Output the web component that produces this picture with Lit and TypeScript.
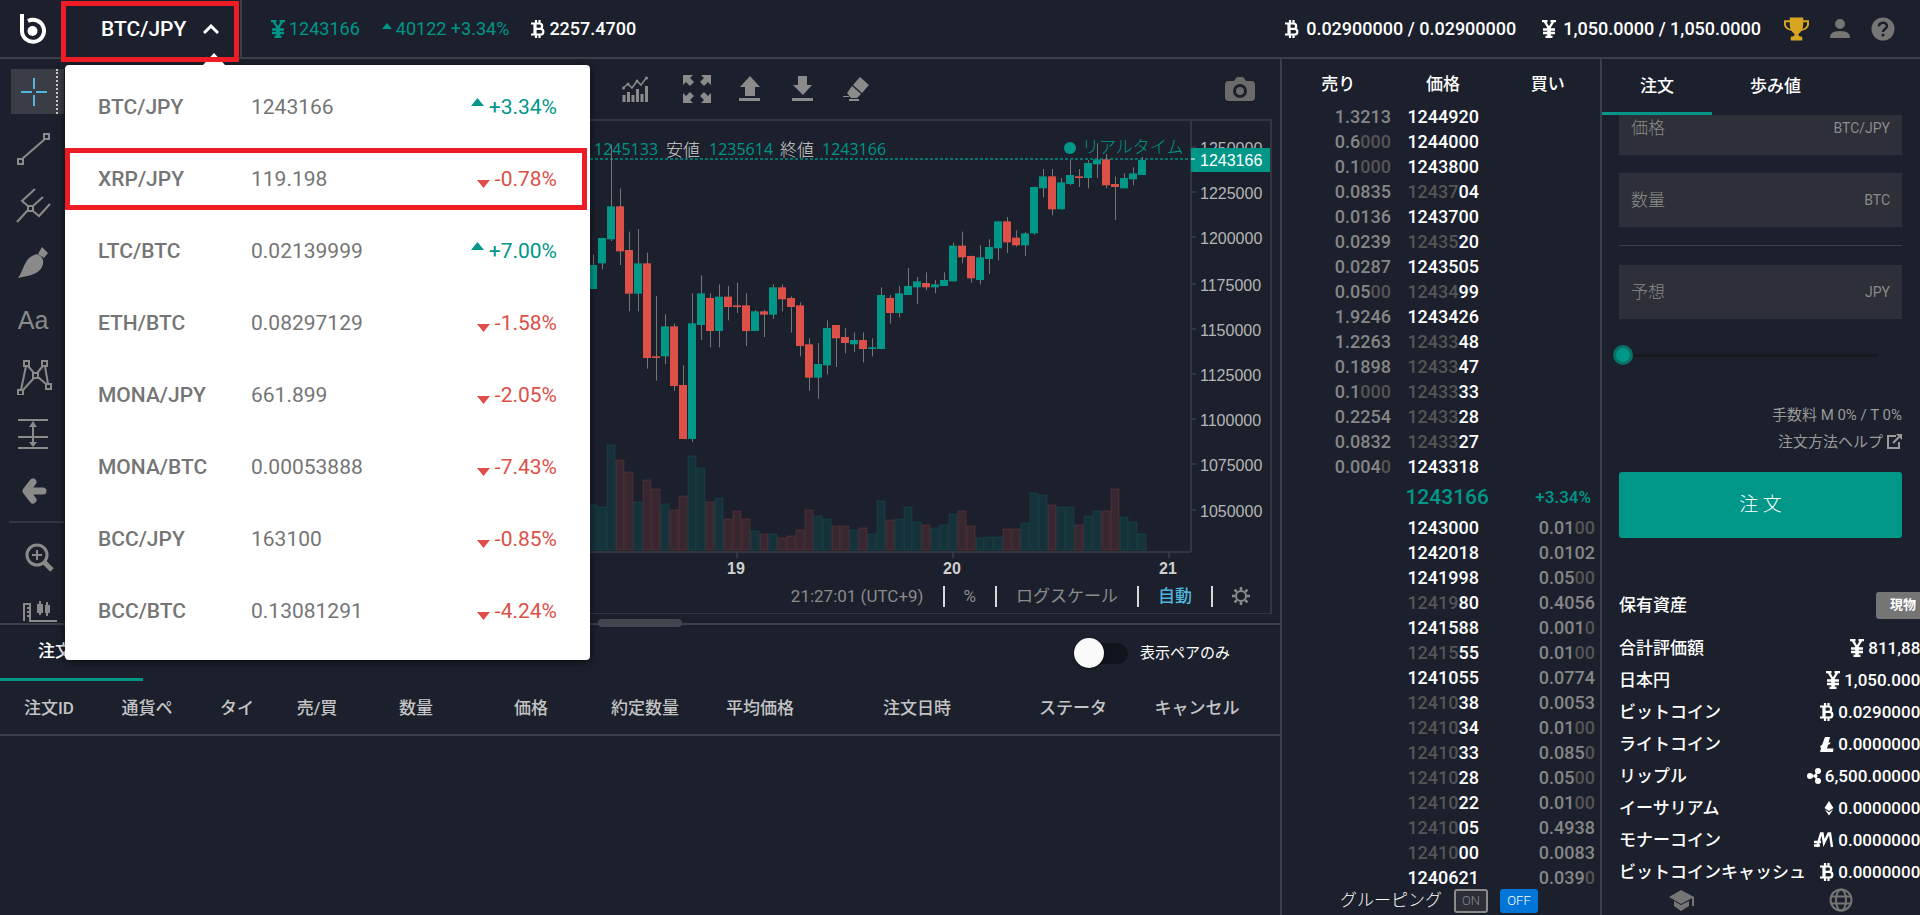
import { LitElement, html, css, svg } from "lit";
import { customElement } from "lit/decorators.js";

type Pair = [name: string, price: string, change: string];
type Level = [size: string, zeros: string, dim: string, price: string];

const PAIRS: Pair[] = [
  ["BTC/JPY", "1243166", "+3.34%"],
  ["XRP/JPY", "119.198", "-0.78%"],
  ["LTC/BTC", "0.02139999", "+7.00%"],
  ["ETH/BTC", "0.08297129", "-1.58%"],
  ["MONA/JPY", "661.899", "-2.05%"],
  ["MONA/BTC", "0.00053888", "-7.43%"],
  ["BCC/JPY", "163100", "-0.85%"],
  ["BCC/BTC", "0.13081291", "-4.24%"],
];

const ASKS: Level[] = [
  ["1.3213", "", "", "1244920"],
  ["0.6", "000", "", "1244000"],
  ["0.1", "000", "", "1243800"],
  ["0.0835", "", "12437", "04"],
  ["0.0136", "", "", "1243700"],
  ["0.0239", "", "12435", "20"],
  ["0.0287", "", "", "1243505"],
  ["0.05", "00", "12434", "99"],
  ["1.9246", "", "", "1243426"],
  ["1.2263", "", "12433", "48"],
  ["0.1898", "", "12433", "47"],
  ["0.1", "000", "12433", "33"],
  ["0.2254", "", "12433", "28"],
  ["0.0832", "", "12433", "27"],
  ["0.004", "0", "", "1243318"],
];

const BIDS: Level[] = [
  ["0.01", "00", "", "1243000"],
  ["0.0102", "", "", "1242018"],
  ["0.05", "00", "", "1241998"],
  ["0.4056", "", "12419", "80"],
  ["0.001", "0", "", "1241588"],
  ["0.01", "00", "12415", "55"],
  ["0.0774", "", "", "1241055"],
  ["0.0053", "", "12410", "38"],
  ["0.01", "00", "12410", "34"],
  ["0.085", "0", "12410", "33"],
  ["0.05", "00", "12410", "28"],
  ["0.01", "00", "12410", "22"],
  ["0.4938", "", "12410", "05"],
  ["0.0083", "", "12410", "00"],
  ["0.039", "0", "", "1240621"],
];

const ORDER_COLUMNS: [string, number][] = [
  ["注文ID", 98], ["通貨ペ", 98], ["タイ", 82], ["売/買", 78], ["数量", 120],
  ["価格", 110], ["約定数量", 118], ["平均価格", 112], ["注文日時", 202],
  ["ステータ", 110], ["キャンセル", 138],
];
const ORDER_TOTAL = 1280;

const ASSETS: [string, string, string][] = [
  ["合計評価額", "yen", "811,880"],
  ["日本円", "yen", "1,050.0000"],
  ["ビットコイン", "btc", "0.02900000"],
  ["ライトコイン", "ltc", "0.00000000"],
  ["リップル", "xrp", "6,500.000000"],
  ["イーサリアム", "eth", "0.00000000"],
  ["モナーコイン", "mona", "0.00000000"],
  ["ビットコインキャッシュ", "btc", "0.00000000"],
];

// Candles in thirds of a pixel: high, body top, body bottom, low, direction, volume.
const CANDLES: [number, number, number, number, 0 | 1, number][] = [
  [614, 645, 717, 717, 1, 134], [564, 564, 640, 658, 1, 129], [284, 469, 568, 573, 1, 314],
  [415, 469, 604, 645, 0, 269], [545, 600, 731, 784, 0, 233], [537, 640, 731, 784, 1, 143],
  [608, 640, 924, 956, 0, 211], [738, 919, 924, 992, 0, 183], [793, 829, 919, 942, 1, 138],
  [820, 829, 1008, 1022, 0, 120], [946, 1005, 1167, 1167, 0, 161], [730, 820, 1167, 1176, 1, 282],
  [676, 730, 825, 870, 1, 247], [730, 744, 843, 892, 0, 143], [703, 740, 843, 892, 1, 156],
  [708, 740, 771, 811, 0, 93], [698, 766, 771, 789, 0, 116], [730, 766, 843, 888, 0, 93],
  [780, 784, 843, 843, 1, 57], [780, 784, 794, 861, 0, 48], [703, 712, 794, 807, 1, 48],
  [703, 712, 748, 784, 0, 35], [739, 744, 771, 848, 0, 43], [757, 766, 888, 919, 0, 61],
  [865, 883, 983, 1022, 0, 121], [879, 942, 983, 1046, 1, 102], [811, 834, 946, 973, 1, 93],
  [825, 825, 865, 951, 0, 71], [834, 861, 879, 910, 0, 71], [847, 870, 883, 906, 1, 61],
  [847, 870, 897, 937, 0, 66], [865, 892, 897, 919, 1, 48], [712, 735, 897, 897, 1, 147],
  [735, 744, 789, 821, 0, 89], [708, 730, 789, 802, 1, 93], [654, 708, 735, 735, 1, 130],
  [681, 694, 712, 762, 1, 84], [667, 699, 712, 721, 0, 75], [690, 703, 712, 730, 1, 66],
  [667, 690, 708, 708, 1, 75], [577, 587, 694, 694, 1, 107], [545, 587, 622, 640, 0, 116],
  [617, 618, 685, 698, 0, 71], [586, 622, 690, 703, 1, 35], [568, 591, 627, 672, 1, 40],
  [514, 514, 595, 631, 1, 40], [501, 514, 577, 609, 0, 62], [541, 563, 586, 590, 0, 62],
  [546, 550, 586, 618, 1, 80], [410, 411, 550, 554, 1, 170], [357, 379, 415, 442, 1, 166],
  [357, 379, 478, 496, 0, 134], [384, 397, 478, 478, 1, 129], [330, 375, 402, 406, 1, 129],
  [357, 379, 384, 411, 0, 75], [330, 339, 384, 415, 1, 102], [280, 328, 343, 384, 1, 116],
  [312, 328, 406, 415, 0, 116], [380, 402, 411, 510, 0, 183], [370, 384, 415, 415, 1, 98],
  [352, 370, 388, 406, 1, 84], [321, 330, 375, 375, 1, 48],
];

const PRICE_TICKS: [string, number][] = [
  ["1250000", 148], ["1225000", 193], ["1200000", 238], ["1175000", 285], ["1150000", 330],
  ["1125000", 375], ["1100000", 420], ["1075000", 465], ["1050000", 511],
];
const DAY_TICKS: [string, number][] = [["19", 736], ["20", 952], ["21", 1168]];

const coin = (kind: string) => {
  switch (kind) {
    case "yen":
      return html`<svg class="coin" viewBox="0 0 14 18" role="img" aria-label="JPY"><path d="M0 1h5.500M8.500 1H14M2.500 1L7 8.500 11.500 1M7 8v9M3.500 17h7M1 9.500h12M1 13h12" fill="none" stroke="currentColor" stroke-width="2.400"/><path d="M7 8v9" stroke="currentColor" stroke-width="3.500"/></svg>`;
    case "btc":
      return html`<svg class="coin" viewBox="0 0 14 18" role="img" aria-label="BTC"><path d="M0 3.500h8.500a2.500 2.500 0 0 1 0 5.300H3.500M3.500 8.800h6a2.800 2.800 0 0 1 0 5.700H0M5 0v3M8.500 0v3M5 15v3M8.500 15v3" fill="none" stroke="currentColor" stroke-width="2.200"/><path d="M4 3v12" stroke="currentColor" stroke-width="3.200"/></svg>`;
    case "ltc":
      return html`<svg class="coin" viewBox="0 0 14 18" role="img" aria-label="LTC"><path d="M5 2h5L8.500 8l2-1-.5 2-2 1-1 3.500h6.500L13 17H0l1.300-4.800-1.300.6.500-2 1.500-.8z" fill="currentColor"/></svg>`;
    case "xrp":
      return html`<svg class="coin" viewBox="0 0 14 18" role="img" aria-label="XRP"><path d="M3 9h5l3-5M8 9l3 5" fill="none" stroke="currentColor" stroke-width="1.500"/><g fill="currentColor"><circle cx="3" cy="9" r="3"/><circle cx="11" cy="4" r="3"/><circle cx="11" cy="14" r="3"/><circle cx="8.500" cy="9" r="2"/></g></svg>`;
    case "eth":
      return html`<svg class="coin slim" viewBox="0 0 10 18" role="img" aria-label="ETH"><path d="M5 2l4.500 7L5 12 .5 9zM.8 10.500L5 13.300l4.200-2.800L5 16.500z" fill="currentColor"/></svg>`;
    default:
      return html`<svg class="coin wide" viewBox="0 0 20 18" role="img" aria-label="MONA"><path d="M3 16L7 2.500h1.500L10 12l4.500-9.500H16L18 16M0 11h7M0 14.500h6" fill="none" stroke="currentColor" stroke-width="2.400"/></svg>`;
  }
};

const TOOLS: [string, unknown][] = [
  ["十字線", svg`<path class="accent" d="M18 4v11M18 21v11M5 18h11M20 18h11"/>`],
  ["トレンドライン", svg`<path d="M2 28h5v5H2zM28 3h5v5h-5zM6 28L29 8"/>`],
  ["ピッチフォーク", svg`<path d="M12 18h5v5h-5zM12 22L1 34M12 18L6 13 19 1M17 18L27 9M17 23l6 5 11-12"/>`],
  ["ブラシ", svg`<path class="solid" d="M2 33C7 27 8 15 16 11c4-2 5-2 7-1 5 3 5 8 3 12-4 8-15 9-24 11zM22 9l4-7 6 6-4 5z"/>`],
  ["テキスト", svg`<text x="17" y="27" text-anchor="middle">Aa</text>`],
  ["パターン", svg`<path d="M8 2h5v5H8zM26 2h5v5h-5zM17 14h5v5h-5zM2 31h5v5H2zM30 25h5v5h-5zM10 7L5 31M7 31l11-12M12 7l6 7M27 7l-6 7M29 7l3 18M22 18l8 7"/>`],
  ["予測", svg`<path d="M2 4h30M2 21h30M2 32h30M17 6v24"/><path class="solid" d="M17 5l4 6h-8zM17 31l4-5h-8z"/>`],
  ["戻る", svg`<path class="fat" d="M17 9l-7 9 7 9M11 18h16"/>`],
];

@customElement("app-root")
export class AppRoot extends LitElement {
  static styles = css`
    :host {
      --bg: #1b202c;
      --line: #3c3f47;
      --teal: #009688;
      --red: #dd5048;
      display: flex;
      flex-direction: column;
      height: 100vh;
      overflow: hidden;
      background: var(--bg);
      color: #fff;
      font-family: Roboto, "Noto Sans CJK JP", sans-serif;
      font-size: 17px;
      line-height: 24px;
    }
    * { box-sizing: border-box; }
    button { font: inherit; color: inherit; background: none; border: 0; padding: 0; cursor: pointer; }
    svg { display: block; flex: none; }
    ul { list-style: none; margin: 0; padding: 0; }
    .teal { color: var(--teal); }
    .coin { width: 14px; height: 18px; }
    .coin.slim { width: 10px; }
    .coin.wide { width: 20px; }

    header { display: flex; align-items: center; height: 59px; flex: none; border-bottom: 2px solid var(--line); font-size: 18px; }
    .logo { width: 62px; padding-left: 20px; }
    .pair { position: relative; align-self: stretch; width: 180px; border-right: 2px solid var(--line); }
    .pair-button { display: flex; align-items: center; gap: 17px; width: 100%; height: 57px; padding-left: 39px; font-size: 21px; font-weight: 500; }
    .mark { position: absolute; border: 5px solid #ee1c24; pointer-events: none; }
    .mark-pair { left: -1px; top: 1px; width: 178px; height: 61px; z-index: 3; }
    .ticker { display: flex; align-items: center; gap: 22px; padding-left: 29px; }
    .ticker span, .balances span { display: flex; align-items: center; gap: 4px; }
    .strong { font-weight: 500; }
    .balances { display: flex; align-items: center; gap: 26px; margin-left: auto; padding-right: 23px; font-weight: 500; }
    .balances span { gap: 7px; }
    .header-icons { display: flex; align-items: center; gap: 21px; padding-right: 25px; color: #757575; }

    .menu { position: absolute; left: 3px; top: 65px; width: 525px; padding: 6px 0 13px; background: #fff; border-radius: 4px; box-shadow: 0 2px 8px rgba(0, 0, 0, 0.6); color: #757575; z-index: 2; }
    .menu::before { content: ""; position: absolute; left: 138px; top: -12px; border: 11px solid transparent; border-top: 0; border-bottom: 12px solid #fff; }
    .menu li { position: relative; }
    .menu-row { display: grid; grid-template-columns: 153px 1fr auto; align-items: center; width: 100%; height: 72px; padding: 0 33px; text-align: left; font-size: 21px; }
    .change { display: flex; align-items: center; gap: 5px; }
    .up { color: var(--teal); }
    .down { color: var(--red); }
    .up svg { margin-bottom: 10px; }
    .down svg { margin-top: 9px; }
    .mark-row { left: 0; right: 3px; top: 5px; bottom: 5px; }

    main { display: flex; flex: 1; min-height: 0; }
    .left { flex: 1; min-width: 0; display: flex; flex-direction: column; }
    .chart { display: grid; grid-template-columns: 64px 1fr; height: 564px; overflow: hidden; }
    .tools { display: flex; flex-direction: column; padding-top: 4px; }
    .tool { display: flex; align-items: center; height: 57px; flex: none; padding-left: 16px; }
    .tool.active { position: relative; height: 45px; margin: 6px 0 6px 11px; padding-left: 5px; background: #3a3d45; }
    .tool.active::after { content: ""; position: absolute; left: 45px; top: 0; bottom: 0; border-left: 2px dotted #c8c8c8; }
    .tools svg { fill: none; stroke: #8a8a8a; stroke-width: 2; }
    .tools .accent { stroke: #52b5dc; }
    .tools .solid { fill: #8a8a8a; stroke: none; }
    .tools .fat { stroke-width: 7; stroke-linecap: round; stroke-linejoin: round; }
    .tools text { fill: #8a8a8a; stroke: none; font: 25px "Liberation Sans", sans-serif; }
    .tools hr { width: 55px; border: 0; border-top: 2px solid #33363e; margin: 2px 0 5px 9px; flex: none; }
    .tool.indent { padding-left: 21px; }
    .toolbar { display: flex; align-items: center; height: 60px; padding: 0 25px 0 557px; color: #8b8b8b; }
    .toolbar button { width: 28px; margin-right: 25px; }
    .toolbar .studies { margin-right: 34px; }
    .toolbar .camera { width: 30px; margin: 0 0 0 auto; color: #6b6b6b; }
    .frame { margin-right: 8px; border: 2px solid #33363e; border-width: 2px 2px 1px 0; }
    .plot { width: 100%; height: 459px; }
    .axis { stroke: #33363e; stroke-width: 2; fill: none; }
    .axis-text { font: 16px "Liberation Sans", sans-serif; fill: #b5b5b5; }
    .axis-text.current { fill: #fff; }
    .day { font-weight: 700; fill: #d0d0d0; text-anchor: middle; }
    .legend { font: 16px "Open Sans", "Noto Sans CJK JP", sans-serif; fill: var(--teal); }
    .cjk { font: 300 17px "Noto Sans CJK JP", sans-serif; fill: #d0d0d0; }
    .live { font: 300 17px "Noto Sans CJK JP", sans-serif; fill: var(--teal); }
    .wick { stroke: #757575; stroke-width: 1; }
    .bull { fill: #009688; }
    .bear { fill: #dd5048; }
    .status { display: flex; justify-content: flex-end; align-items: center; gap: 19px; height: 33px; padding: 0 20px 1px 0; color: #8b8b8b; }
    .status i { width: 2px; height: 21px; background: #d8d8d8; }
    .status .on { color: #52b5dc; font-weight: 500; }

    .splitter { position: relative; height: 2px; flex: none; background: var(--line); }
    .splitter::after { content: ""; position: absolute; left: 50%; top: -4px; width: 84px; height: 8px; margin-left: -42px; border-radius: 4px; background: #43464e; }
    .orders-head { display: flex; justify-content: space-between; height: 56px; flex: none; }
    .tab { font-weight: 500; border-bottom: 3px solid transparent; padding: 0 38px; }
    .tab.current { border-color: var(--teal); }
    .tab-orders { width: 143px; text-align: left; padding-bottom: 1px; }
    .toggle { display: flex; align-items: center; gap: 12px; padding-right: 50px; font-size: 15px; }
    .switch { appearance: none; position: relative; width: 54px; height: 21px; margin: 0; border-radius: 11px; background: linear-gradient(90deg, transparent 15px, #10141c 15px); }
    .switch::before { content: ""; position: absolute; left: 0; top: -5px; width: 30px; height: 30px; border-radius: 50%; background: #fafafa; box-shadow: 0 1px 3px rgba(0, 0, 0, 0.6); }
    table { width: 100%; table-layout: fixed; border-collapse: collapse; border-bottom: 2px solid var(--line); }
    th { height: 54px; padding: 1px 0 0; font-weight: 500; color: #c4c4c4; white-space: nowrap; }

    .book { display: flex; flex-direction: column; width: 320px; flex: none; border-left: 2px solid var(--line); font-size: 18px; font-weight: 500; line-height: 25px; }
    .book-head { display: grid; grid-template-columns: repeat(3, 1fr); height: 45px; align-items: center; padding: 6px 0 0 4px; font-size: 17px; text-align: center; }
    .level { display: grid; grid-template-columns: 109px 88px 1fr; padding-right: 5px; height: 25px; text-align: right; }
    .size { color: #868686; }
    .dim { color: #555; }
    .last { display: grid; grid-template-columns: 207px 1fr; height: 36px; align-items: center; padding-right: 9px; text-align: right; font-size: 21px; color: var(--teal); }
    .last small { font-size: 17px; }
    .grouping { display: flex; align-items: center; justify-content: center; gap: 12px; margin-top: -2px; padding-right: 4px; font-size: 17px; font-weight: 300; }
    .group-button { height: 24px; width: 34px; border: 2px solid #8b8b8b; border-radius: 3px; font-size: 13px; line-height: 20px; color: #868686; background: #2c2f37; }
    .group-button.selected { width: 38px; background: #0275d8; border-color: #0275d8; color: #fff; }

    aside { display: flex; flex-direction: column; width: 320px; flex: none; border-left: 2px solid var(--line); overflow: hidden; }
    .tabs { display: flex; height: 56px; flex: none; }
    .scroller { flex: 1; min-height: 0; overflow: hidden; padding: 0 18px 0 17px; }
    form { margin-top: -14px; }
    .field { display: flex; align-items: center; height: 54px; padding: 0 12px; margin-bottom: 18px; background: #2d3038; color: #8b8b8b; }
    .field input { flex: 1; min-width: 0; border: 0; background: none; color: inherit; font: inherit; outline: 0; }
    .field label { font-weight: 300; }
    .field span { font-size: 14px; }
    form hr { border: 0; border-top: 1px solid var(--line); margin: 0 0 19px; }
    .slider { appearance: none; display: block; width: 265px; height: 20px; margin: 26px 0 36px -6px; background: linear-gradient(#151920, #151920) 0 9px / 100% 3px no-repeat; }
    .slider::-webkit-slider-thumb { appearance: none; width: 20px; height: 20px; border-radius: 50%; background: var(--teal); border: 3px solid #087065; }
    .note { display: flex; justify-content: flex-end; align-items: center; gap: 4px; height: 27px; font-size: 15px; color: #9a9a9a; text-decoration: none; }
    .submit { width: 100%; height: 66px; margin: 17px 0 51px; border-radius: 3px; background: var(--teal); font-size: 19px; font-weight: 300; }
    .assets { margin-right: -28px; font-weight: 500; }
    .assets-head { display: flex; align-items: center; justify-content: space-between; height: 32px; margin-bottom: 11px; }
    .spot { width: 54px; height: 27px; border-radius: 3px; background: #757575; font-size: 13px; font-weight: 700; }
    .asset { display: flex; justify-content: space-between; align-items: center; height: 32px; }
    .asset span { display: flex; align-items: center; gap: 4px; }
    .links { display: grid; grid-template-columns: 1fr 1fr; height: 30px; flex: none; align-items: center; justify-items: center; color: #757575; }
    .links a { color: inherit; }
  `;

  private renderMenu() {
    return html`<ul class="menu">
      ${PAIRS.map(([name, price, change], i) => {
        const up = change[0] === "+";
        return html`<li>
          <button class="menu-row">
            <span class="strong">${name}</span><span>${price}</span>
            <span class="change ${up ? "up" : "down"}">
              <svg width="13" height="8" viewBox="0 0 13 8"><path d=${up ? "M6.5 0L13 8H0z" : "M0 0h13L6.5 8z"} fill="currentColor"/></svg>${change}
            </span>
          </button>
          ${i === 1 ? html`<div class="mark mark-row"></div>` : ""}
        </li>`;
      })}
    </ul>`;
  }

  private renderHeader() {
    return html`<header>
      <div class="logo">
        <svg width="26" height="32" viewBox="0 0 26 32"><path d="M2 1v17" stroke="#fff" stroke-width="4" fill="none"/><path d="M2 18a11 11 0 1 0 6-10" stroke="#fff" stroke-width="4" fill="none"/><circle cx="12.500" cy="18" r="5" fill="#fff"/></svg>
      </div>
      <div class="pair">
        <button class="pair-button" aria-expanded="true">BTC/JPY
          <svg width="16" height="10" viewBox="0 0 16 10"><path d="M1 9l7-7 7 7" fill="none" stroke="#fff" stroke-width="3"/></svg>
        </button>
        ${this.renderMenu()}
        <div class="mark mark-pair"></div>
      </div>
      <div class="ticker">
        <span class="teal">${coin("yen")}1243166</span>
        <span class="teal"><svg width="10" height="12" viewBox="0 0 10 12"><path d="M5 0l5 6H0z" fill="currentColor"/></svg>40122 +3.34%</span>
        <span class="strong">${coin("btc")}2257.4700</span>
      </div>
      <div class="balances">
        <span>${coin("btc")}0.02900000 / 0.02900000</span>
        <span>${coin("yen")}1,050.0000 / 1,050.0000</span>
      </div>
      <div class="header-icons">
        <button aria-label="ランキング"><svg width="25" height="24" viewBox="0 0 26 24"><path d="M6 0h14v3h6v4c0 4-4 6-8 7-1 2-3 2-3 4 0 1 1 2 4 2v4H7v-4c3 0 4-1 4-2 0-2-2-2-3-4-4-1-8-3-8-7V3h6zM2 5v2c0 2 2 4 5 5-1-2-1-4-1-7zm22 0h-4c0 3 0 5-1 7 3-1 5-3 5-5z" fill="#daa520"/></svg></button>
        <button aria-label="アカウント"><svg width="20" height="20" viewBox="0 0 20 20"><path d="M10 0a5 5 0 1 1 0 10 5 5 0 0 1 0-10zM0 19c0-4 2-7 10-7s10 3 10 7z" fill="currentColor"/></svg></button>
        <button aria-label="ヘルプ"><svg width="24" height="24" viewBox="0 0 24 24"><circle cx="12" cy="12" r="11.500" fill="currentColor"/><path d="M8 9.500c0-5 8-5 8-.5 0 3-4 3-4 6" fill="none" stroke="#1b202c" stroke-width="2.500"/><circle cx="12" cy="18" r="1.600" fill="#1b202c"/></svg></button>
      </div>
    </header>`;
  }

  private renderPlot() {
    const x = (i: number) => Math.round(593.3 + i * 9);
    return html`<svg class="plot" viewBox="64 121 1206 459" preserveAspectRatio="xMaxYMin meet">
      ${CANDLES.map(([, , , , up, v], i) => svg`<rect class=${up ? "bull" : "bear"} fill-opacity="0.150" stroke=${up ? "#009688" : "#dd5048"} stroke-opacity="0.200" x=${x(i) - 4} y=${Math.round(550 - v / 3)} width="8" height=${Math.round(v / 3)}/>`)}
      <path class="axis" d="M64 552H1191M1191 121V552"/>
      <path d="M590 159H1190" stroke="#009688" stroke-width="2" stroke-opacity="0.700" stroke-dasharray="3 2"/>
      <text class="legend" x="594" y="155">1245133</text>
      <text class="cjk" x="666" y="156">安値</text>
      <text class="legend" x="709" y="155">1235614</text>
      <text class="cjk" x="780" y="156">終値</text>
      <text class="legend" x="822" y="155">1243166</text>
      <circle cx="1070" cy="148" r="6" fill="#009688"/>
      <text class="live" x="1082" y="153">リアルタイム</text>
      ${CANDLES.map(([h, t, b, l, up], i) => svg`
        <path class="wick" d="M${x(i) + 0.5} ${50 + h / 3}V${50 + l / 3}"/>
        <rect class=${up ? "bull" : "bear"} x=${x(i) - 4} y=${50 + t / 3} width="8" height=${(b - t) / 3}/>`)}
      ${PRICE_TICKS.map(([label, y]) => svg`<path class="axis" d="M1192 ${y - 1}h4"/><text class="axis-text" x="1200" y=${y + 6}>${label}</text>`)}
      ${DAY_TICKS.map(([label, dx]) => svg`<path class="axis" d="M${dx + 1} 553v5"/><text class="axis-text day" x=${dx} y="574">${label}</text>`)}
      <rect x="1191" y="148" width="79" height="24" fill="#009688"/>
      <path d="M1191 159h4" stroke="#fff" stroke-width="1"/>
      <text class="axis-text current" x="1200" y="166">1243166</text>
    </svg>`;
  }

  private renderChart() {
    return html`<section class="chart">
      <nav class="tools">
        ${TOOLS.map(([label, shape], i) => html`<button class="tool ${i === 0 ? "active" : ""}" aria-label=${label}><svg width="36" height="36" viewBox="0 0 36 36">${shape}</svg></button>`)}
        <hr />
        <button class="tool indent" aria-label="ズーム"><svg width="36" height="36" viewBox="0 0 36 36"><circle cx="16" cy="16" r="10" stroke-width="3"/><path d="M11 16h10M16 11v10"/><path d="M23 23l8 8" stroke-width="5"/></svg></button>
        <button class="tool indent" aria-label="測定"><svg width="36" height="36" viewBox="0 0 36 36"><path d="M3 25V8h6v16M6 12h3M6 16h3M6 20h3M8 25h28M19 5v14M26 6v14"/><path class="solid" d="M16 8h6v9h-6zM24 9h5v8h-5z"/></svg></button>
      </nav>
      <div>
        <div class="toolbar">
          <button class="studies" aria-label="インジケーター"><svg width="28" height="28" viewBox="0 0 28 28"><path d="M3 27v-7M7.500 27v-10M12 27v-7M16.500 27V14M21 27v-8M25.500 27V11" stroke="currentColor" stroke-width="3"/><path d="M2 13l5-4 4 4 5-7 4 4 6-8" fill="none" stroke="currentColor" stroke-width="1.500"/><g fill="currentColor"><circle cx="2.500" cy="13" r="1.500"/><circle cx="7" cy="9" r="1.500"/><circle cx="16" cy="6" r="1.500"/><circle cx="25.500" cy="3" r="1.500"/></g></svg></button>
          <button aria-label="全画面"><svg width="28" height="28" viewBox="0 0 28 28"><path d="M0 0h10L7 3l4 4-4 4-4-4-3 3zM28 0H18l3 3-4 4 4 4 4-4 3 3zM0 28h10l-3-3 4-4-4-4-4 4-3-3zM28 28H18l3-3-4-4 4-4 4 4 3-3z" fill="currentColor"/></svg></button>
          <button aria-label="保存"><svg width="28" height="28" viewBox="0 0 28 28"><path d="M14 1l10 11h-5v9H9v-9H4zM3 23h21v3H3z" fill="currentColor"/></svg></button>
          <button aria-label="読込"><svg width="28" height="28" viewBox="0 0 28 28"><path d="M9 1h9v9h5l-9 10L4 10h5zM3 23h21v3H3z" fill="currentColor"/></svg></button>
          <button aria-label="消去"><svg width="28" height="28" viewBox="0 0 28 28"><path d="M18 2l9 8-7 8-9-8zM10 11l9 8-4 4H9l-4-5zM1 21h6v1H1zM7 24h10v2H7z" fill="currentColor"/></svg></button>
          <button class="camera" aria-label="スクリーンショット"><svg width="30" height="24" viewBox="0 0 30 24"><path d="M4 4h5l2-3 1-1h6l1 1 2 3h5q4 0 4 4v12q0 4-4 4H4q-4 0-4-4V8q0-4 4-4z" fill="currentColor"/><circle cx="15" cy="14" r="5.500" fill="currentColor" stroke="#1b202c" stroke-width="3"/></svg></button>
        </div>
        <div class="frame">
          ${this.renderPlot()}
          <div class="status">
            <span>21:27:01 (UTC+9)</span><i></i>
            <button>%</button><i></i>
            <button>ログスケール</button><i></i>
            <button class="on">自動</button><i></i>
            <button aria-label="設定"><svg width="18" height="18" viewBox="0 0 18 18"><circle cx="9" cy="9" r="5" fill="none" stroke="currentColor" stroke-width="2"/><path d="M9 0v3M9 15v3M0 9h3M15 9h3M2.600 2.600l2.200 2.200M13.200 13.200l2.200 2.200M2.600 15.400l2.200-2.200M13.200 4.800l2.200-2.200" stroke="currentColor" stroke-width="2.500"/></svg></button>
          </div>
        </div>
      </div>
    </section>`;
  }

  private renderOrders() {
    return html`<div class="splitter"></div>
      <section>
        <div class="orders-head">
          <button class="tab tab-orders current">注文</button>
          <label class="toggle"><input class="switch" type="checkbox" />表示ペアのみ</label>
        </div>
        <table>
          <colgroup>${ORDER_COLUMNS.map(([, w]) => html`<col style="width:${(w / ORDER_TOTAL) * 100}%" />`)}<col /></colgroup>
          <thead><tr>${ORDER_COLUMNS.map(([name]) => html`<th>${name}</th>`)}<td></td></tr></thead>
        </table>
      </section>`;
  }

  private renderBook() {
    const price = (dim: string, rest: string) => html`<span><span class="dim">${dim}</span>${rest}</span>`;
    const size = (s: string, zeros: string) => html`<span class="size">${s}<span class="dim">${zeros}</span></span>`;
    return html`<section class="book">
      <div class="book-head"><span>売り</span><span>価格</span><span>買い</span></div>
      ${ASKS.map(([s, z, d, p]) => html`<div class="level">${size(s, z)}${price(d, p)}</div>`)}
      <div class="last"><span>1243166</span><small>+3.34%</small></div>
      ${BIDS.map(([s, z, d, p]) => html`<div class="level"><span></span>${price(d, p)}${size(s, z)}</div>`)}
      <div class="grouping"><span>グルーピング</span><button class="group-button">ON</button><button class="group-button selected">OFF</button></div>
    </section>`;
  }

  private renderSide() {
    const field = (id: string, label: string, unit: string) => html`<div class="field"><label for=${id}>${label}</label><input id=${id} /><span>${unit}</span></div>`;
    return html`<aside>
      <div class="tabs"><button class="tab current">注文</button><button class="tab">歩み値</button></div>
      <div class="scroller">
        <form @submit=${(e: Event) => e.preventDefault()}>
          ${field("price", "価格", "BTC/JPY")}
          ${field("amount", "数量", "BTC")}
          <hr />
          ${field("estimate", "予想", "JPY")}
          <input class="slider" type="range" min="0" max="100" value="0" aria-label="数量の割合" />
          <div class="note">手数料 M 0% / T 0%</div>
          <a class="note" href="#help">注文方法ヘルプ
            <svg width="15" height="15" viewBox="0 0 15 15"><path d="M9 2H1v12h11V8M6 9l7-7" fill="none" stroke="currentColor" stroke-width="2"/><path d="M9 0h6v6z" fill="currentColor"/></svg>
          </a>
          <button class="submit">注 文</button>
        </form>
        <div class="assets">
          <div class="assets-head"><span>保有資産</span><button class="spot">現物</button></div>
          ${ASSETS.map(([name, kind, value]) => html`<div class="asset">${name}<span>${coin(kind)}${value}</span></div>`)}
        </div>
      </div>
      <nav class="links">
        <a href="#learn" aria-label="ガイド"><svg width="25" height="21" viewBox="0 0 25 21"><path d="M12 0l13 7-13 7L0 7zM5 11l7 4 8-4v5l-8 5-7-5zM23 7h2v9h-2z" fill="currentColor"/></svg></a>
        <a href="#language" aria-label="言語"><svg width="24" height="24" viewBox="0 0 24 24"><g fill="none" stroke="currentColor" stroke-width="2"><circle cx="12" cy="12" r="10.500"/><ellipse cx="12" cy="12" rx="5" ry="10.500"/><path d="M2 8.500h20M2 15.500h20"/></g></svg></a>
      </nav>
    </aside>`;
  }

  render() {
    return html`${this.renderHeader()}
      <main>
        <div class="left">${this.renderChart()}${this.renderOrders()}</div>
        ${this.renderBook()}${this.renderSide()}
      </main>`;
  }
}
